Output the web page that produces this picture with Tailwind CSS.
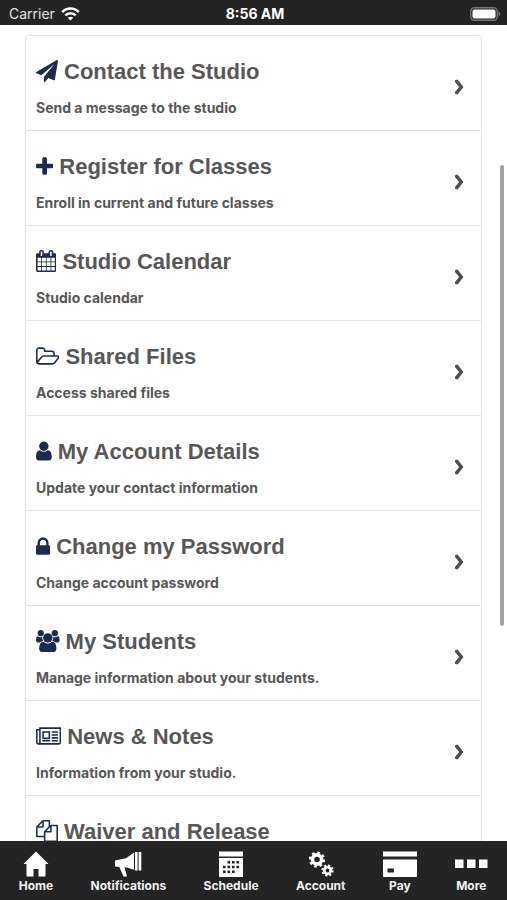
<!DOCTYPE html>
<html lang="en">
<head>
<meta charset="utf-8">
<meta name="viewport" content="width=device-width, initial-scale=1">
<title>Studio</title>
<script src="https://cdn.jsdelivr.net/npm/@tailwindcss/browser@4"></script>
</head>
<body class="h-screen flex flex-col overflow-hidden bg-white font-['Liberation_Sans',Arial,sans-serif] text-[#575757]">

<header class="shrink-0 grid grid-cols-3 items-center h-[25px] pt-[2px] pl-[9px] pr-[6px] bg-[#242424] text-white font-['Inter',sans-serif]">
  <div class="flex items-center gap-[6px] text-[14px] text-[#e0e0e0]">
    <span>Carrier</span>
    <svg class="w-[19px] h-[14px]" viewBox="0 0 19 14" fill="none" stroke="#fff" stroke-width="2.5" aria-hidden="true"><path d="M1.2 5.2C5.8.4 13.2.4 17.8 5.2M4.3 8.4c2.9-2.9 7.5-2.9 10.4 0"/><path d="M9.500 13.600 6.700 10.800Q9.500 8.500 12.300 10.800Z" fill="#fff" stroke="none"/></svg>
  </div>
  <time class="text-center text-[14px] font-bold whitespace-nowrap">8:56 AM</time>
  <svg class="justify-self-end w-[31px] h-[14px]" viewBox="0 0 31 14" aria-hidden="true"><rect x=".75" y=".75" width="26.500" height="12.500" rx="3.500" fill="none" stroke="#777" stroke-width="1.300"/><rect x="2.500" y="2.500" width="23" height="9" rx="2" fill="#fff"/><path d="M28.500 4.800q1.800.6 1.800 2.200t-1.800 2.200z" fill="#777"/></svg>
</header>

<main class="relative flex-1 min-h-0 overflow-hidden pt-[10px] px-[25px]">
  <ul class="border border-[#e3e3e3] rounded-[4px] divide-y divide-[#e3e3e3] [&_a]:flex [&_a]:items-center [&_a]:justify-between [&_a]:h-[94px] [&_a]:pt-[8px] [&_a]:pl-[10px] [&_a]:pr-[17px] [&_h2]:flex [&_h2]:items-center [&_h2]:gap-[6px] [&_h2]:h-[28px] [&_h2]:text-[22px] [&_h2]:font-bold [&_h2_svg]:h-[22px] [&_h2_svg]:fill-[#1b2b4f] [&_p]:mt-[14px] [&_p]:text-[14px] [&_p]:leading-[18px] [&_p]:font-bold [&_p]:font-['Inter',sans-serif]">
    <li><a href="#contact"><div><h2><svg viewBox="0 0 1792 1792" aria-hidden="true"><path d="M1764 11q33 24 27 64l-256 1536q-5 29-32 45-14 8-31 8-11 0-24-5l-453-185-242 295q-18 23-49 23-13 0-22-4-19-7-30.500-23.500t-11.500-36.500v-349l864-1059-1069 925-395-162q-37-14-40-55-2-40 32-59l1664-960q15-9 32-9 20 0 36 11z"/></svg>Contact the Studio</h2><p>Send a message to the studio</p></div><svg class="w-[10px] h-[16px] fill-[#4d4d4d]" viewBox="0 0 10 16" aria-hidden="true"><path d="M1 1.200 3.500.5 9.500 8l-6 7.500L1 14.800V13L5.200 8 1 3z"/></svg></a></li>
    <li><a href="#register"><div><h2><svg viewBox="192 0 1408 1792" aria-hidden="true"><path d="M1600 800v192q0 40-28 68t-68 28h-416v416q0 40-28 68t-68 28h-192q-40 0-68-28t-28-68v-416h-416q-40 0-68-28t-28-68v-192q0-40 28-68t68-28h416v-416q0-40 28-68t68-28h192q40 0 68 28t28 68v416h416q40 0 68 28t28 68z"/></svg>Register for Classes</h2><p>Enroll in current and future classes</p></div><svg class="w-[10px] h-[16px] fill-[#4d4d4d]" viewBox="0 0 10 16" aria-hidden="true"><path d="M1 1.200 3.500.5 9.500 8l-6 7.500L1 14.800V13L5.200 8 1 3z"/></svg></a></li>
    <li><a href="#calendar"><div><h2><svg viewBox="64 0 1664 1792" aria-hidden="true"><path d="M192 1664h288v-288h-288v288zm352 0h320v-288h-320v288zm-352-352h288v-320h-288v320zm352 0h320v-320h-320v320zm-352-384h288v-288h-288v288zm736 736h320v-288h-320v288zm-384-736h320v-288h-320v288zm768 736h288v-288h-288v288zm-384-352h320v-320h-320v320zm-352-864v-288q0-13-9.500-22.500t-22.500-9.500h-64q-13 0-22.500 9.500t-9.500 22.500v288q0 13 9.500 22.500t22.500 9.500h64q13 0 22.500-9.500t9.500-22.500zm736 864h288v-320h-288v320zm-384-384h320v-288h-320v288zm384 0h288v-288h-288v288zm32-480v-288q0-13-9.500-22.500t-22.500-9.500h-64q-13 0-22.500 9.500t-9.500 22.500v288q0 13 9.500 22.500t22.500 9.500h64q13 0 22.500-9.500t9.500-22.500zm384-64v1280q0 52-38 90t-90 38h-1408q-52 0-90-38t-38-90v-1280q0-52 38-90t90-38h128v-96q0-66 47-113t113-47h64q66 0 113 47t47 113v96h384v-96q0-66 47-113t113-47h64q66 0 113 47t47 113v96h128q52 0 90 38t38 90z"/></svg>Studio Calendar</h2><p>Studio calendar</p></div><svg class="w-[10px] h-[16px] fill-[#4d4d4d]" viewBox="0 0 10 16" aria-hidden="true"><path d="M1 1.200 3.500.5 9.500 8l-6 7.500L1 14.800V13L5.200 8 1 3z"/></svg></a></li>
    <li><a href="#files"><div><h2><svg viewBox="64 -64 1909 1792" aria-hidden="true"><path d="M1845 931q0-35-53-35h-1088q-40 0-85.500 21.500t-71.500 52.500l-294 363q-18 24-18 40 0 35 53 35h1088q40 0 86-22t71-53l294-363q18-22 18-39zm-1141-163h768v-160q0-40-28-68t-68-28h-576q-40 0-68-28t-28-68v-64q0-40-28-68t-68-28h-320q-40 0-68 28t-28 68v853l256-315q44-53 116-87.500t140-34.500zm1269 163q0 62-46 120l-295 363q-43 53-116 87.500t-140 34.500h-1088q-92 0-158-66t-66-158v-960q0-92 66-158t158-66h320q92 0 158 66t66 158v32h544q92 0 158 66t66 158v160h192q54 0 99 24.500t67 70.500q15 32 15 68z"/></svg>Shared Files</h2><p>Access shared files</p></div><svg class="w-[10px] h-[16px] fill-[#4d4d4d]" viewBox="0 0 10 16" aria-hidden="true"><path d="M1 1.200 3.500.5 9.500 8l-6 7.500L1 14.800V13L5.200 8 1 3z"/></svg></a></li>
    <li><a href="#details"><div><h2><svg viewBox="256 0 1280 1792" aria-hidden="true"><path d="M1536 1399q0 109-62.500 187t-150.500 78h-854q-88 0-150.500-78t-62.500-187q0-85 8.500-160.500t31.500-152 58.500-131 94-89 134.500-34.500q131 128 313 128t313-128q76 0 134.500 34.500t94 89 58.500 131 31.500 152 8.500 160.500zm-256-887q0 159-112.500 271.500t-271.500 112.500-271.500-112.500-112.500-271.500 112.500-271.500 271.500-112.500 271.500 112.500 112.500 271.500z"/></svg>My Account Details</h2><p>Update your contact information</p></div><svg class="w-[10px] h-[16px] fill-[#4d4d4d]" viewBox="0 0 10 16" aria-hidden="true"><path d="M1 1.200 3.500.5 9.500 8l-6 7.500L1 14.800V13L5.200 8 1 3z"/></svg></a></li>
    <li><a href="#password"><div><h2><svg viewBox="320 -64 1152 1792" aria-hidden="true"><path d="M640 768h512v-192q0-106-75-181t-181-75-181 75-75 181v192zm832 96v576q0 40-28 68t-68 28h-960q-40 0-68-28t-28-68v-576q0-40 28-68t68-28h32v-192q0-184 132-316t316-132 316 132 132 316v192h32q40 0 68 28t28 68z"/></svg>Change my Password</h2><p>Change account password</p></div><svg class="w-[10px] h-[16px] fill-[#4d4d4d]" viewBox="0 0 10 16" aria-hidden="true"><path d="M1 1.200 3.500.5 9.500 8l-6 7.500L1 14.800V13L5.200 8 1 3z"/></svg></a></li>
    <li><a href="#students"><div><h2><svg viewBox="0 0 1920 1792" aria-hidden="true"><circle cx="384" cy="256" r="256"/><circle cx="1536" cy="256" r="256"/><path d="M593 896q-162 5-265 128H194q-82 0-138-40.500T0 865q0-353 124-353 6 0 43.500 21t97.500 42.500T384 597q67 0 133-23-5 37-5 66 0 139 81 256zM1327 896q162 5 265 128h134q82 0 138-40.500t56-118.500q0-353-124-353-6 0-43.500 21t-97.500 42.500-119 21.500q-67 0-133-23 5 37 5 66 0 139-81 256z"/><circle cx="960" cy="640" r="384"/><path d="M1664 1533q0 120-73 189.500t-194 69.500H523q-121 0-194-69.500T256 1533q0-53 3.500-103.500t14-109T300 1212t43-97.500 62-81 85.500-53.500T602 960q10 0 43 21.500t73 48 107 48 135 21.500 135-21.500 107-48 73-48 43-21.500q61 0 111.500 20t85.500 53.500 62 81 43 97.500 26.500 108.500 14 109 3.500 103.500z"/></svg>My Students</h2><p>Manage information about your students.</p></div><svg class="w-[10px] h-[16px] fill-[#4d4d4d]" viewBox="0 0 10 16" aria-hidden="true"><path d="M1 1.200 3.500.5 9.500 8l-6 7.500L1 14.800V13L5.200 8 1 3z"/></svg></a></li>
    <li><a href="#news"><div><h2><svg viewBox="0 0 2048 1792" aria-hidden="true"><path fill-rule="evenodd" d="M256 192h1792v1216q0 80-56 136t-136 56H192q-80 0-136-56T0 1408V320h256zM128 448v960q0 64 64 64t64-64V448zm256-128v1088q0 33-11 64h1483q64 0 64-64V320zM512 512h640v640H512zm128 128v384h384V640zM512 1216h640v128H512zM1280 512h512v128h-512zM1280 752h512v128h-512zM1280 984h512v128h-512zM1280 1216h512v128h-512z"/></svg>News &amp; Notes</h2><p>Information from your studio.</p></div><svg class="w-[10px] h-[16px] fill-[#4d4d4d]" viewBox="0 0 10 16" aria-hidden="true"><path d="M1 1.200 3.500.5 9.500 8l-6 7.500L1 14.800V13L5.200 8 1 3z"/></svg></a></li>
    <li><a href="#waiver"><div><h2><svg viewBox="0 0 1792 1792" aria-hidden="true"><path d="M1696 384q40 0 68 28t28 68v1216q0 40-28 68t-68 28h-960q-40 0-68-28t-28-68v-288h-544q-40 0-68-28t-28-68v-672q0-40 20-88t48-76l408-408q28-28 76-48t88-20h416q40 0 68 28t28 68v328q68-40 128-40h416zm-544 213l-299 299h299v-299zm-640-384l-299 299h299v-299zm196 647l316-316v-416h-384v416q0 40-28 68t-68 28h-416v640h512v-256q0-40 20-88t48-76zm956 804v-1152h-384v416q0 40-28 68t-68 28h-416v640h896z"/></svg>Waiver and Release</h2><p>&nbsp;</p></div></a></li>
  </ul>
  <div class="absolute right-[3px] top-[140px] w-[4px] h-[461px] rounded-full bg-[#a3a3a3]"></div>
</main>

<nav aria-label="Main" class="shrink-0 flex justify-around h-[59px] pt-[10px] bg-[#242424] text-[#f2f2f2] text-[12px] leading-[16px] font-bold font-['Inter',sans-serif] [&_a]:flex [&_a]:flex-col [&_a]:items-center [&_a]:gap-[1px] [&_svg]:h-[26px] [&_svg]:fill-white">
  <a href="#home"><svg class="w-[26px]" viewBox="0 0 26 26" aria-hidden="true"><path d="M13 .5 25.500 13h-3v11.500q0 1-1 1h-6V18h-5v7.500h-6q-1 0-1-1V13h-3z"/></svg>Home</a>
  <a href="#notifications"><svg class="w-[28px]" viewBox="0 0 28 26" aria-hidden="true"><path d="M1 9.500 12 7.200 20 1.500v17.300l-8.300-2.500h-1.200L13 25.500H9.500L5.300 16.100 1 15.500zM21 1h2.600v18.500H21zM24.600 1h2.700v18.500h-2.700z"/></svg>Notifications</a>
  <a href="#schedule"><svg class="w-[24px]" viewBox="0 0 24 26" aria-hidden="true"><path d="M0 .5h24v5H0z"/><path fill-rule="evenodd" d="M0 7h24v19H0zM8.500 10h2.600v2.600H8.500zm4.500 0h2.600v2.600H13zm4.500 0h2.600v2.600h-2.600zM4 14.700h2.600v2.600H4zm4.500 0h2.600v2.600H8.500zm4.500 0h2.600v2.600H13zm4.500 0h2.600v2.600h-2.600zM4 19.400h2.600V22H4zm4.500 0h2.600V22H8.500zm4.500 0h2.600V22H13z"/></svg>Schedule</a>
  <a href="#account"><svg class="w-[26px]" viewBox="0 0 26 26" aria-hidden="true"><g fill="none" stroke="#fff"><circle cx="9" cy="8.500" r="4.600" stroke-width="3.600"/><circle cx="9" cy="8.500" r="7" stroke-width="2.200" stroke-dasharray="2.750 2.750"/><circle cx="19.500" cy="19.500" r="3.300" stroke-width="2.800"/><circle cx="19.500" cy="19.500" r="5.200" stroke-width="1.800" stroke-dasharray="2.040 2.040"/></g></svg>Account</a>
  <a href="#pay"><svg class="w-[34px]" viewBox="0 0 34 26" aria-hidden="true"><path d="M0 .5h34v5H0z"/><path fill-rule="evenodd" d="M0 8.500h34V26H0zM4.500 17.500v4H11v-4z"/></svg>Pay</a>
  <a href="#more"><svg class="w-[34px]" viewBox="0 0 34 26" aria-hidden="true"><path d="M1 8.500h8.500V17H1zM13 8.500h8.500V17H13zM25 8.500h8.500V17H25z"/></svg>More</a>
</nav>
</body>
</html>
